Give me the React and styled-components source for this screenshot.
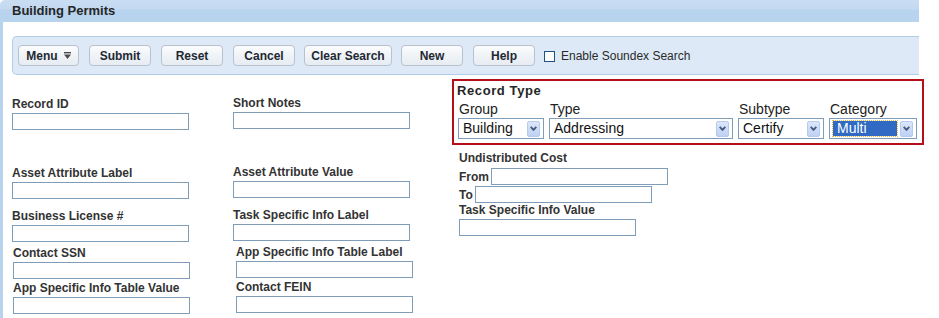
import React from "react";
import styled, { createGlobalStyle } from "styled-components";

const GlobalStyle = createGlobalStyle`
  body {
    margin: 0;
    background: #fff;
    font-family: "Liberation Sans", Arial, sans-serif;
  }
`;

const leftFields = [
  { label: "Record ID", top: 22 },
  { label: "Asset Attribute Label", top: 36 },
  { label: "Business License #", top: 10 },
  { label: "Contact SSN", top: 4, indent: 1 },
  { label: "App Specific Info Table Value", top: 2, indent: 1 },
];

const middleFields = [
  { label: "Short Notes", top: 21 },
  { label: "Asset Attribute Value", top: 36 },
  { label: "Task Specific Info Label", top: 10 },
  { label: "App Specific Info Table Label", top: 4, indent: 3 },
  { label: "Contact FEIN", top: 2, indent: 3 },
];

const toolbarButtons = [
  { text: "Submit", gap: 10 },
  { text: "Reset", gap: 10 },
  { text: "Cancel", gap: 10 },
  { text: "Clear Search", gap: 9, width: 88 },
  { text: "New", gap: 9 },
  { text: "Help", gap: 10 },
];

const recordSelects = [
  { label: "Group", value: "Building", width: 86 },
  { label: "Type", value: "Addressing", width: 184 },
  { label: "Subtype", value: "Certify", width: 86 },
  { label: "Category", value: "Multi", width: 88, focused: true },
];

function MenuGlyph() {
  return (
    <svg width="7" height="7" viewBox="0 0 7 7">
      <rect x="0" y="0" width="7" height="1.4" fill="#4b4b4b" />
      <path d="M0 2.6 H7 L3.5 7 Z" fill="#4b4b4b" />
    </svg>
  );
}

function Chevron() {
  return (
    <svg width="7" height="5" viewBox="0 0 7 5">
      <path d="M0.7 0.9 L3.5 3.9 L6.3 0.9" fill="none" stroke="#455878" strokeWidth="1.8" />
    </svg>
  );
}

function FieldColumn({ fields, width }) {
  return (
    <Column $width={width}>
      {fields.map((f) => (
        <Field key={f.label} $top={f.top} $indent={f.indent || 0}>
          <Label>{f.label}</Label>
          <TextBox type="text" />
        </Field>
      ))}
    </Column>
  );
}

export default function App() {
  return (
    <Page>
      <GlobalStyle />
      <Header>Building Permits</Header>
      <Frame>
        <Content>
          <Toolbar>
            <Button $width={61} $gap={0}>
              Menu <MenuGlyph />
            </Button>
            {toolbarButtons.map((b) => (
              <Button key={b.text} $width={b.width} $gap={b.gap}>
                {b.text}
              </Button>
            ))}
            <CheckOption>
              <CheckBox />
              Enable Soundex Search
            </CheckOption>
          </Toolbar>

          <Main>
            <FieldColumn fields={leftFields} width={221} />
            <FieldColumn fields={middleFields} width={219} />
            <Column $width={472}>
              <RecordBox>
                <RecordTitle>Record Type</RecordTitle>
                <SelectRow>
                  {recordSelects.map((s) => (
                    <SelectField key={s.label} $width={s.width}>
                      <SelectLabel>{s.label}</SelectLabel>
                      <SelectBox>
                        <SelectValue $focused={s.focused}>{s.value}</SelectValue>
                        <ArrowButton>
                          <Chevron />
                        </ArrowButton>
                      </SelectBox>
                    </SelectField>
                  ))}
                </SelectRow>
              </RecordBox>

              <Field $top={6} $indent={7}>
                <Label>Undistributed Cost</Label>
              </Field>
              <InlineField $top={1}>
                <InlineLabel>From</InlineLabel>
                <TextBox type="text" />
              </InlineField>
              <InlineField $top={1}>
                <InlineLabel>To</InlineLabel>
                <TextBox type="text" />
              </InlineField>
              <Field $top={0} $indent={7}>
                <Label>Task Specific Info Value</Label>
                <TextBox type="text" />
              </Field>
            </Column>
          </Main>
        </Content>
      </Frame>
    </Page>
  );
}

const Page = styled.div`
  width: 924px;
`;

const Header = styled.div`
  margin-right: 5px;
  height: 22px;
  padding-left: 12px;
  border-radius: 5px 0 0 0;
  background: linear-gradient(
    #c9def2 0,
    #c3d9f0 9px,
    #b8d3ed 10px,
    #b8d3ed 21px,
    #bcd6ef 22px
  );
  color: #262626;
  font-size: 13px;
  font-weight: bold;
  line-height: 22px;
`;

const Frame = styled.div`
  padding-left: 3px;
  background: linear-gradient(to right, #b8d3ed 3px, #fff 3px);
`;

const Content = styled.div`
  min-height: 296px;
  padding-top: 14px;
  background: #fff;
  border-top-left-radius: 4px;
`;

const Toolbar = styled.div`
  display: flex;
  align-items: flex-start;
  height: 39px;
  box-sizing: border-box;
  margin: 0 5px 0 9px;
  padding: 8px 5px 8px;
  background: #dde9f6;
  border: 1px solid #b1cee9;
  border-right: none;
  border-radius: 5px 0 0 5px;
`;

const Button = styled.button`
  display: flex;
  align-items: center;
  justify-content: center;
  flex: 0 0 auto;
  gap: 6px;
  width: ${(p) => p.$width || 62}px;
  height: 21px;
  margin: 0 0 0 ${(p) => p.$gap}px;
  padding: 0;
  box-sizing: border-box;
  border: 1px solid #b7c2cd;
  border-radius: 4px;
  background: linear-gradient(#fbfcfd, #eef2f6 60%, #e6ecf2);
  color: #1f2933;
  font-family: "Liberation Sans", Arial, sans-serif;
  font-size: 12px;
  font-weight: bold;
  white-space: nowrap;
  cursor: pointer;
`;

const CheckOption = styled.label`
  display: flex;
  align-items: center;
  height: 21px;
  margin-left: 9px;
  color: #2a2a2a;
  font-size: 12px;
`;

const CheckBox = styled.span`
  width: 11px;
  height: 11px;
  margin: 1px 6px 0 0;
  box-sizing: border-box;
  border: 1px solid #1d5283;
  background: #fff;
`;

const Main = styled.div`
  display: flex;
  align-items: flex-start;
  padding-left: 9px;
`;

const Column = styled.div`
  display: flex;
  flex-direction: column;
  width: ${(p) => p.$width}px;
  flex-shrink: 0;
`;

const Field = styled.div`
  margin-top: ${(p) => p.$top}px;
  margin-left: ${(p) => p.$indent}px;
`;

const Label = styled.div`
  margin-bottom: 1px;
  color: #333;
  font-size: 12px;
  font-weight: bold;
  line-height: 15px;
  white-space: nowrap;
`;

const TextBox = styled.input`
  display: block;
  width: 177px;
  height: 17px;
  padding: 0 2px;
  box-sizing: border-box;
  border: 1px solid #7f9db9;
  background: #fff;
  outline: none;
`;

const InlineField = styled.div`
  display: flex;
  align-items: center;
  margin: ${(p) => p.$top}px 0 0 7px;
`;

const InlineLabel = styled.span`
  margin-right: 2px;
  color: #333;
  font-size: 12px;
  font-weight: bold;
`;

const RecordBox = styled.div`
  margin-top: 4px;
  padding: 2px 4px 4px 3px;
  box-sizing: border-box;
  border: 2px solid #b3101a;
`;

const RecordTitle = styled.div`
  color: #262626;
  font-size: 13px;
  font-weight: bold;
  line-height: 16px;
  letter-spacing: 0.6px;
`;

const SelectRow = styled.div`
  display: flex;
  gap: 5px;
  margin-top: 2px;
  padding-left: 1px;
`;

const SelectField = styled.div`
  display: flex;
  flex-direction: column;
  width: ${(p) => p.$width}px;
`;

const SelectLabel = styled.div`
  margin-bottom: 1px;
  padding-left: 1px;
  color: #222;
  font-size: 14px;
  line-height: 16px;
`;

const SelectBox = styled.div`
  display: flex;
  align-items: center;
  height: 21px;
  padding: 0 3px 0 2px;
  box-sizing: border-box;
  border: 1px solid #7f9db9;
  background: #fff;
  font-size: 14px;
  color: #111;
`;

const SelectValue = styled.span`
  flex: 1;
  overflow: hidden;
  white-space: nowrap;
  line-height: 15px;
  padding-left: ${(p) => (p.$focused ? "4px" : "2px")};
  margin: ${(p) => (p.$focused ? "0 3px 0 1px" : "0")};
  background: ${(p) => (p.$focused ? "#316ac5" : "transparent")};
  color: ${(p) => (p.$focused ? "#fff" : "#111")};
  outline: ${(p) => (p.$focused ? "1px dotted #e9b94a" : "none")};
`;

const ArrowButton = styled.span`
  display: flex;
  align-items: center;
  justify-content: center;
  width: 13px;
  height: 16px;
  box-sizing: border-box;
  border: 1px solid #b6c9ee;
  border-radius: 2px;
  background: linear-gradient(#dbe6fb, #bfd1f4);
`;
